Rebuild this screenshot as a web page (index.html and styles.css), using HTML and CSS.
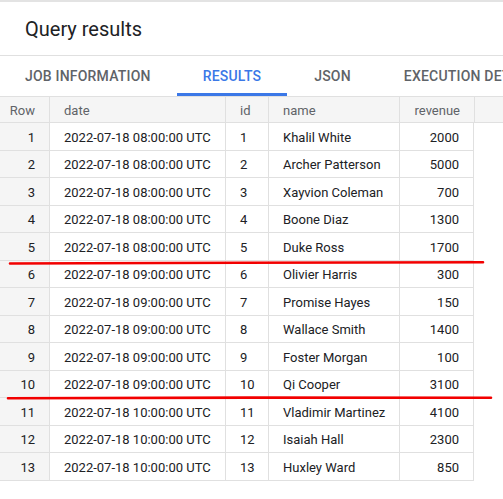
FILE: index.html
```html
<!DOCTYPE html>
<html lang="en">
<head>
  <meta charset="UTF-8">
  <meta name="viewport" content="width=device-width, initial-scale=1.0">
  <title>Query results</title>
  <link rel="stylesheet" href="styles.css">
</head>
<body>
  <div class="page">
    <div class="title-bar">
      <h1>Query results</h1>
    </div>

    <div class="tabs">
      <div class="tab tab-first">JOB INFORMATION</div>
      <div class="tab active">RESULTS</div>
      <div class="tab">JSON</div>
      <div class="tab">EXECUTION DETAILS</div>
    </div>

    <div class="grid">
      <div class="row head">
        <div class="cell num">Row</div>
        <div class="cell">date</div>
        <div class="cell">id</div>
        <div class="cell">name</div>
        <div class="cell right">revenue</div>
      </div>
      <div class="row"><div class="cell num">1</div><div class="cell">2022-07-18 08:00:00 UTC</div><div class="cell">1</div><div class="cell">Khalil White</div><div class="cell right">2000</div></div>
      <div class="row"><div class="cell num">2</div><div class="cell">2022-07-18 08:00:00 UTC</div><div class="cell">2</div><div class="cell">Archer Patterson</div><div class="cell right">5000</div></div>
      <div class="row"><div class="cell num">3</div><div class="cell">2022-07-18 08:00:00 UTC</div><div class="cell">3</div><div class="cell">Xayvion Coleman</div><div class="cell right">700</div></div>
      <div class="row"><div class="cell num">4</div><div class="cell">2022-07-18 08:00:00 UTC</div><div class="cell">4</div><div class="cell">Boone Diaz</div><div class="cell right">1300</div></div>
      <div class="row"><div class="cell num">5</div><div class="cell">2022-07-18 08:00:00 UTC</div><div class="cell">5</div><div class="cell">Duke Ross</div><div class="cell right">1700</div></div>
      <div class="row"><div class="cell num">6</div><div class="cell">2022-07-18 09:00:00 UTC</div><div class="cell">6</div><div class="cell">Olivier Harris</div><div class="cell right">300</div></div>
      <div class="row"><div class="cell num">7</div><div class="cell">2022-07-18 09:00:00 UTC</div><div class="cell">7</div><div class="cell">Promise Hayes</div><div class="cell right">150</div></div>
      <div class="row"><div class="cell num">8</div><div class="cell">2022-07-18 09:00:00 UTC</div><div class="cell">8</div><div class="cell">Wallace Smith</div><div class="cell right">1400</div></div>
      <div class="row"><div class="cell num">9</div><div class="cell">2022-07-18 09:00:00 UTC</div><div class="cell">9</div><div class="cell">Foster Morgan</div><div class="cell right">100</div></div>
      <div class="row"><div class="cell num">10</div><div class="cell">2022-07-18 09:00:00 UTC</div><div class="cell">10</div><div class="cell">Qi Cooper</div><div class="cell right">3100</div></div>
      <div class="row"><div class="cell num">11</div><div class="cell">2022-07-18 10:00:00 UTC</div><div class="cell">11</div><div class="cell">Vladimir Martinez</div><div class="cell right">4100</div></div>
      <div class="row"><div class="cell num">12</div><div class="cell">2022-07-18 10:00:00 UTC</div><div class="cell">12</div><div class="cell">Isaiah Hall</div><div class="cell right">2300</div></div>
      <div class="row"><div class="cell num">13</div><div class="cell">2022-07-18 10:00:00 UTC</div><div class="cell">13</div><div class="cell">Huxley Ward</div><div class="cell right">850</div></div>
    </div>

    <!-- hand drawn marks over the table -->
    <svg class="marks" width="503" height="499" viewBox="0 0 503 499">
      <path d="M10 263.5 Q120 263 240 262.8 T483 262.3" />
      <path d="M8 398.3 Q130 397.8 250 397.6 T491 397.8" />
    </svg>
  </div>
</body>
</html>
```

FILE: styles.css
```css
body {
  margin: 0;
  font-family: Roboto, 'Noto Sans', sans-serif;
  color: #202124;
  background: white;
}
.page {
  position: relative;
  width: 503px;
  height: 499px;
  overflow: hidden;
  border-top: 2px solid #e3e3e3;
  box-sizing: border-box;
}
.title-bar {
  height: 53px;
  border-bottom: 1px solid #e0e0e0;
  display: flex;
  align-items: center;
  padding-left: 25px;
}
h1 {
  margin: 0;
  font-size: 20px;
  font-weight: 400;
  color: #202124;
}
.tabs {
  display: flex;
  height: 40px;
  white-space: nowrap;
}
.tab {
  padding: 0 26px 0 27px;
  display: flex;
  align-items: center;
  font-size: 14px;
  font-weight: 500;
  letter-spacing: 0.2px;
  color: #5f6368;
  border-bottom: 3px solid transparent;
  padding-top: 3px;
}
.tab-first {
  padding-left: 25px;
  padding-right: 26px;
}
.tab.active {
  padding-left: 26px;
  color: #3b78e7;
  border-bottom-color: #3b78e7;
}
.grid {
  border-top: 1px solid #e0e0e0;
}
.row {
  display: grid;
  grid-template-columns: 50px 176px 43px 131px 74px;
  height: 27.5px;
  font-size: 13px;
  width: 474px;
}
.row.head {
  width: 100%;
  height: 26px;
  background: #f5f5f5;
  color: #5f6368;
  border-bottom: 1px solid #e0e0e0;
  box-sizing: border-box;
  grid-template-columns: 50px 176px 43px 131px 74px 1fr;
}
.row.head::after {
  content: "";
  border-left: 1px solid #e0e0e0;
}
.cell {
  display: flex;
  align-items: center;
  padding: 2px 14px 0;
  border-right: 1px solid #e0e0e0;
  border-bottom: 1px solid #e0e0e0;
  white-space: nowrap;
  overflow: hidden;
}
.row.head .cell {
  border-bottom: none;
  padding-top: 1px;
}
.row.head .cell:nth-child(5) {
  border-right: none;
}
.num {
  justify-content: flex-end;
  background: #f5f5f5;
}
.right {
  justify-content: flex-end;
}
.marks {
  position: absolute;
  left: 0;
  top: -2px;
  pointer-events: none;
}
.marks path {
  fill: none;
  stroke: #f20000;
  stroke-width: 2.6;
  stroke-linecap: round;
}
```
